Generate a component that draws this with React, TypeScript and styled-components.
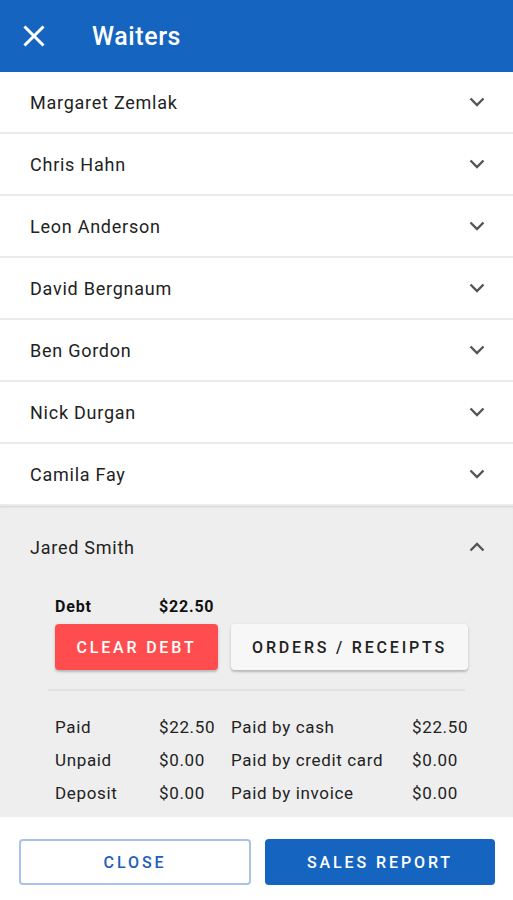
import React from "react";
import styled, { createGlobalStyle } from "styled-components";

const Global = createGlobalStyle`
  html, body { margin: 0; padding: 0; background: #fff; }
  body { font-family: Roboto, "Noto Sans", sans-serif; -webkit-font-smoothing: antialiased; }
  * { box-sizing: border-box; }
`;

const Page = styled.div`
  width: 513px;
  height: 900px;
  display: flex;
  flex-direction: column;
  overflow: hidden;
  background: #fff;
`;

const Header = styled.header`
  height: 72px;
  flex: none;
  background: #1565c0;
  display: flex;
  align-items: center;
  padding-left: 22px;
  gap: 46px;
  color: #fff;
`;

const Title = styled.h1`
  margin: 0;
  font-size: 25px;
  font-weight: 500;
  letter-spacing: 0.6px;
`;

const List = styled.div`
  flex: 1;
  display: flex;
  flex-direction: column;
`;

const Row = styled.div<{ $open?: boolean }>`
  height: ${(p) => (p.$open ? "82px" : "62px")};
  flex: none;
  display: flex;
  align-items: center;
  justify-content: space-between;
  padding: 0 24px 0 30px;
  border-bottom: ${(p) => (p.$open ? "none" : "2px solid #ebebeb")};
  font-size: 18px;
  color: #222;
  letter-spacing: 0.75px;
`;

const Expanded = styled.div`
  flex: 1;
  background: #eeeeee;
  display: flex;
  flex-direction: column;
  box-shadow: inset 0 2px 2px -1px rgba(0, 0, 0, 0.12);
`;

const Details = styled.div`
  padding: 0 45px 0 55px;
  display: flex;
  flex-direction: column;
`;

const DebtLine = styled.div`
  display: grid;
  grid-template-columns: 104px auto;
  font-size: 16px;
  font-weight: 700;
  color: #111;
  letter-spacing: 0.8px;
  margin-top: 8px;
  height: 20px;
  align-items: center;
`;

const ButtonRow = styled.div`
  display: flex;
  gap: 13px;
  margin-top: 8px;
`;

const RaisedButton = styled.button<{ $variant: "danger" | "light" }>`
  height: 46px;
  border: none;
  border-radius: 4px;
  font-family: Roboto, sans-serif;
  font-size: 16px;
  font-weight: 500;
  letter-spacing: 2.8px;
  text-transform: uppercase;
  cursor: pointer;
  width: ${(p) => (p.$variant === "danger" ? "163px" : "237px")};
  background: ${(p) => (p.$variant === "danger" ? "#ff4d4f" : "#f7f7f7")};
  color: ${(p) => (p.$variant === "danger" ? "#fff" : "#222")};
  box-shadow: 0 2px 2px rgba(0, 0, 0, 0.18), 0 1px 4px rgba(0, 0, 0, 0.08);
`;

const Divider = styled.hr`
  margin: 19px 3px 0 -7px;
  border: none;
  border-top: 2px solid #e2e2e2;
`;

const Stats = styled.div`
  display: grid;
  grid-template-columns: 104px 72px 181px auto;
  grid-auto-rows: 33px;
  align-items: center;
  margin-top: 19px;
  font-size: 17px;
  color: #222;
  letter-spacing: 0.65px;
`;

const Footer = styled.footer`
  height: 83px;
  flex: none;
  background: #fff;
  display: flex;
  align-items: flex-start;
  gap: 14px;
  padding: 22px 18px 0 19px;
`;

const FooterButton = styled.button<{ $primary?: boolean }>`
  flex: none;
  width: ${(p) => (p.$primary ? "230px" : "232px")};
  height: 46px;
  border-radius: 4px;
  font-family: Roboto, sans-serif;
  font-size: 16px;
  font-weight: 500;
  letter-spacing: 2.9px;
  text-transform: uppercase;
  background: ${(p) => (p.$primary ? "#1565c0" : "#fff")};
  color: ${(p) => (p.$primary ? "#fff" : "#1f5fb8")};
  border: ${(p) => (p.$primary ? "none" : "2px solid #a9c3e8")};
`;

const IconBox = styled.span`
  display: inline-flex;
  width: 24px;
  height: 24px;
`;

const CloseIcon = () => (
  <IconBox>
    <svg width="24" height="24" viewBox="0 0 24 24">
      <path d="M3.5 3.5 L20.5 20.5 M20.5 3.5 L3.5 20.5" stroke="#fff" strokeWidth="3" strokeLinecap="square" />
    </svg>
  </IconBox>
);

const Chevron = ({ up }: { up?: boolean }) => (
  <IconBox>
    <svg width="24" height="24" viewBox="0 0 24 24">
      <path
        d={up ? "M5.5 15.5 L12 9 L18.5 15.5" : "M5.5 8.5 L12 15 L18.5 8.5"}
        fill="none"
        stroke="#555"
        strokeWidth="2.4"
      />
    </svg>
  </IconBox>
);

const waiters = [
  "Margaret Zemlak",
  "Chris Hahn",
  "Leon Anderson",
  "David Bergnaum",
  "Ben Gordon",
  "Nick Durgan",
  "Camila Fay",
];

const stats = [
  ["Paid", "$22.50", "Paid by cash", "$22.50"],
  ["Unpaid", "$0.00", "Paid by credit card", "$0.00"],
  ["Deposit", "$0.00", "Paid by invoice", "$0.00"],
];

export default function App() {
  return (
    <Page>
      <Global />
      <Header>
        <CloseIcon />
        <Title>Waiters</Title>
      </Header>
      <List>
        {waiters.map((w) => (
          <Row key={w}>
            <span>{w}</span>
            <Chevron />
          </Row>
        ))}
        <Expanded>
          <Row $open>
            <span>Jared Smith</span>
            <Chevron up />
          </Row>
          <Details>
            <DebtLine>
              <span>Debt</span>
              <span>$22.50</span>
            </DebtLine>
            <ButtonRow>
              <RaisedButton $variant="danger">Clear debt</RaisedButton>
              <RaisedButton $variant="light">Orders / Receipts</RaisedButton>
            </ButtonRow>
            <Divider />
            <Stats>
              {stats.flat().map((s, i) => (
                <span key={i}>{s}</span>
              ))}
            </Stats>
          </Details>
        </Expanded>
      </List>
      <Footer>
        <FooterButton>Close</FooterButton>
        <FooterButton $primary>Sales report</FooterButton>
      </Footer>
    </Page>
  );
}
